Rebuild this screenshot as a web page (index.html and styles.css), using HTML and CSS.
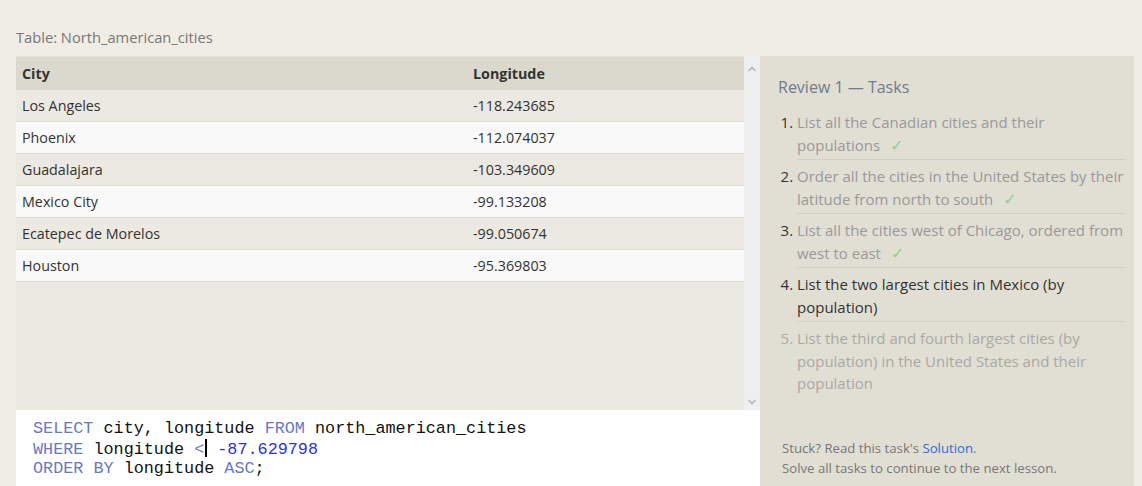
FILE: index.html
```html
<!DOCTYPE html>
<html>
<head>
<meta charset="utf-8">
<link rel="stylesheet" href="styles.css">
</head>
<body>
<div class="page">
  <div class="left">
    <div class="table-title">Table: North_american_cities</div>
    <div class="results">
      <div class="table-area">
        <table class="data">
          <thead>
            <tr><th class="c1">City</th><th class="c2">Longitude</th></tr>
          </thead>
          <tbody>
            <tr><td>Los Angeles</td><td>-118.243685</td></tr>
            <tr><td>Phoenix</td><td>-112.074037</td></tr>
            <tr><td>Guadalajara</td><td>-103.349609</td></tr>
            <tr><td>Mexico City</td><td>-99.133208</td></tr>
            <tr><td>Ecatepec de Morelos</td><td>-99.050674</td></tr>
            <tr><td>Houston</td><td>-95.369803</td></tr>
          </tbody>
        </table>
      </div>
      <div class="scrollbar">
        <svg class="arrow" width="10" height="8" viewBox="0 0 10 8"><path d="M1.5 6 L5 2.5 L8.5 6" fill="none" stroke="#b4b4b4" stroke-width="1.6"/></svg>
        <svg class="arrow" width="10" height="8" viewBox="0 0 10 8"><path d="M1.5 2 L5 5.5 L8.5 2" fill="none" stroke="#b4b4b4" stroke-width="1.6"/></svg>
      </div>
    </div>
    <div class="editor"><div class="code-line"><span class="kw">SELECT</span> city, longitude <span class="kw">FROM</span> north_american_cities</div><div class="code-line"><span class="kw">WHERE</span> longitude <span class="kw">&lt;</span><span class="caret"></span> <span class="num">-87.629798</span></div><div class="code-line"><span class="kw">ORDER BY</span> longitude <span class="kw">ASC</span>;</div></div>
  </div>
  <div class="tasks">
    <h2 class="tasks-title">Review 1 — Tasks</h2>
    <ol class="task-list">
      <li class="done"><span class="txt">List all the Canadian cities and their populations</span><span class="check">✓</span></li>
      <li class="done"><span class="txt">Order all the cities in the United States by their latitude from north to south</span><span class="check">✓</span></li>
      <li class="done"><span class="txt">List all the cities west of Chicago, ordered from west to east</span><span class="check">✓</span></li>
      <li class="current"><span class="txt">List the two largest cities in Mexico (by population)</span></li>
      <li class="todo"><span class="txt">List the third and fourth largest cities (by population) in the United States and their population</span></li>
    </ol>
    <div class="tasks-footer">
      <div>Stuck? Read this task's <a class="link" href="#">Solution</a>.</div>
      <div>Solve all tasks to continue to the next lesson.</div>
    </div>
  </div>
</div>
</body>
</html>
```
FILE: styles.css
```css
html, body {
  margin: 0;
  padding: 0;
  background: #f0ede5;
  font-family: "Open Sans", "Noto Sans", sans-serif;
  color: #333;
}
.page {
  display: flex;
  padding: 0 8px 0 16px;
  height: 486px;
  overflow: hidden;
}
.left {
  flex: 0 0 744px;
  display: flex;
  flex-direction: column;
}
.table-title {
  padding-top: 27px;
  height: 29px;
  font-size: 14.7px;
  line-height: 20px;
  color: #777;
  box-sizing: content-box;
}
.results {
  display: flex;
  height: 354px;
  background: #eae9e1;
}
.table-area {
  flex: 1;
  border-top: 1px solid #e4e2d8;
}
.data {
  width: 100%;
  border-collapse: collapse;
  font-size: 14.3px;
  line-height: 19px;
}
.data th {
  text-align: left;
  font-weight: 700;
  background: #dbd9cd;
  padding: 7px 6px 7px;
  color: #333;
}
.data th.c1 { width: 439px; }
.data td {
  padding: 6px 6px;
  border-bottom: 1px solid #dcdad2;
  color: #333;
}
.data tbody tr:nth-child(odd) td { background: #ebe9e1; }
.data tbody tr:nth-child(even) td { background: #f9f9f9; }
.scrollbar {
  flex: 0 0 16px;
  background: #efefef;
  display: flex;
  flex-direction: column;
  justify-content: space-between;
  align-items: center;
  padding: 9px 0 4px;
}
.arrow { display: block; }
.editor {
  background: #fff;
  flex: 1;
  padding: 9px 17px 0;
  font-family: "Liberation Mono", "Courier New", monospace;
  font-size: 16.8px;
  line-height: 19.5px;
  color: #111;
  white-space: pre;
}
.kw { color: #6a78bf; }
.num { color: #3030dc; }
.caret {
  display: inline-block;
  width: 2px;
  height: 18px;
  background: #000;
  vertical-align: -3px;
  margin-left: 1px;
}
.tasks {
  flex: 1;
  background: #e1dfd4;
  margin-top: 56px;
  padding: 18px 9px 0 18px;
  display: flex;
  flex-direction: column;
}
.tasks-title {
  margin: 0;
  font-weight: 400;
  font-size: 16px;
  line-height: 26px;
  color: #6f7b8e;
}
.task-list {
  margin: 6px 0 0;
  padding: 0 0 0 19px;
  font-size: 15px;
  line-height: 22.5px;
}
.task-list li {
  padding: 5px 0 3px;
  border-bottom: 1px solid #d2d0c5;
}
.task-list li:last-child { border-bottom: none; }
.task-list li.done { color: #333; }
.task-list li.done .txt { color: #999; }
.task-list li.current { color: #333; }
.task-list li.todo { color: #a9a9a4; }
.check {
  display: inline-block;
  font-family: "DejaVu Sans", sans-serif;
  font-size: 16px;
  line-height: 16px;
  color: #86d193;
  margin-left: 10px;
}
.tasks-footer {
  margin-top: 40px;
  padding-left: 4px;
  font-size: 13.2px;
  line-height: 20px;
  color: #777;
}
.link {
  color: #2a6ddb;
  text-decoration: none;
}
```
